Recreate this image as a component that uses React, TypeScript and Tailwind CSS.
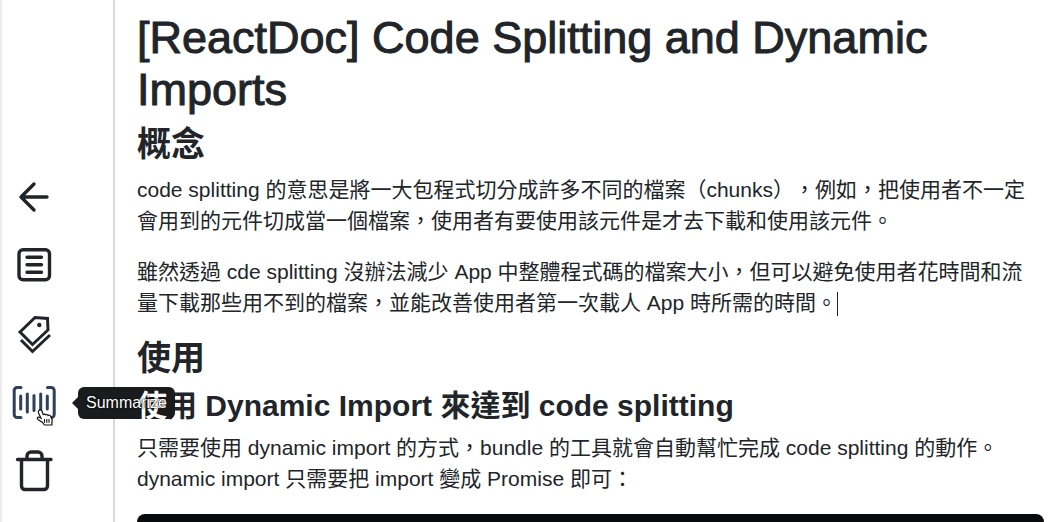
import React from "react";

const icon = {
  viewBox: "0 0 48 48",
  fill: "none",
  stroke: "currentColor",
  strokeWidth: 3,
  strokeLinecap: "round" as const,
  strokeLinejoin: "round" as const,
  className: "size-12",
  "aria-hidden": true,
};

function BackIcon() {
  return (
    <svg {...icon} strokeWidth={3.4}>
      <path d="M37 24H11M24 11 11 24l13 13" />
    </svg>
  );
}

function NoteIcon() {
  return (
    <svg {...icon} strokeWidth={3.4}>
      <rect x="9" y="8.700" width="30.500" height="30" rx="4" />
      <path d="M17 16.300h14.500M17 23.800h14.500M17 31.300h14.500" />
    </svg>
  );
}

function TagsIcon() {
  return (
    <svg {...icon} strokeLinecap="butt" strokeLinejoin="miter">
      <path d="M10 23 25 8.500l12.500 1L38 21 22.500 35.500Z" />
      <path d="M11 31 22.500 42.500 40 26" />
      <circle cx="29.300" cy="16" r="2.200" fill="currentColor" stroke="none" />
    </svg>
  );
}

function SummarizeIcon() {
  return (
    <svg {...icon}>
      <path d="M11 10.500H7.200a3 3 0 0 0-3 3v24a3 3 0 0 0 3 3H11M37.500 10.500h3.700a3 3 0 0 1 3 3v24a3 3 0 0 1-3 3h-3.700" />
      <path d="M10.700 19v13M17.300 17v18M24 18.500v15M30.700 17v18M37.300 19v13" />
    </svg>
  );
}

function TrashIcon() {
  return (
    <svg {...icon} strokeWidth={3.4}>
      <path d="M7.500 14.500H41M11.500 14.500V41a3.500 3.500 0 0 0 3.500 3.500h19a3.500 3.500 0 0 0 3.500-3.500V14.500M17 14.500v-3.500a4 4 0 0 1 4-4h7a4 4 0 0 1 4 4v3.500" />
    </svg>
  );
}

function HandPointer() {
  return (
    <svg viewBox="0 0 18 18" className="pointer-events-none absolute top-8 left-[26px] size-[18px]" aria-hidden="true">
      <path
        d="M3 1.500c1-1 2.500-.6 2.900.5L7.200 5.500c.9-.8 2-.5 2.400.3.9-.6 2-.3 2.400.6 1.200-.6 2.300 0 2.600 1l1.500 3.300c.4 1-.2 1.900-.2 3V16H8.500L6.500 13.500 2 10.500c-1.500-1.300-.3-2.900 1-2.300l2 1L2.500 4c-.4-1-.3-1.900.5-2.500Z"
        fill="#fff"
        stroke="#111"
        strokeWidth="1.200"
      />
      <path d="M8.500 10v3.800M10.800 10v3.800M13 10v3.800" stroke="#111" strokeWidth="1.100" />
    </svg>
  );
}

const tool = "flex size-12 items-center justify-center";

export default function App() {
  return (
    <div className="flex min-h-screen bg-white font-['Liberation_Sans','Noto_Sans_CJK_TC',sans-serif] text-[#212529] [text-spacing-trim:space-all]">
      <nav
        aria-label="Note tools"
        className="flex w-[115px] shrink-0 flex-col gap-5 border-r-2 border-l-2 border-r-[#d9d9d9] border-l-[#ececec] pt-[173px] pl-2"
      >
        <button type="button" aria-label="Back" className={tool}>
          <BackIcon />
        </button>
        <button type="button" aria-label="Note" className={tool}>
          <NoteIcon />
        </button>
        <button type="button" aria-label="Tags" className={tool}>
          <TagsIcon />
        </button>
        <button
          type="button"
          aria-describedby="tip"
          aria-label="Summarize"
          className="relative flex size-12 items-center justify-center text-[#2f405a]"
        >
          <SummarizeIcon />
          <HandPointer />
          <span
            id="tip"
            role="tooltip"
            className="absolute top-[10px] left-[68px] flex h-8 items-center rounded-md bg-[#191b1d] px-2 text-base text-white"
          >
            <svg viewBox="0 0 6 12" className="absolute top-[10px] -left-[6px] h-3 w-[6px]" aria-hidden="true">
              <path d="M6 0v12L0 6Z" fill="#191b1d" />
            </svg>
            <span className="relative z-20 [text-shadow:0_0_1px_#000,0_0_2px_#000]">Summarize</span>
          </span>
        </button>
        <button type="button" aria-label="Delete" className={tool}>
          <TrashIcon />
        </button>
      </nav>

      <main className="h-screen min-w-0 flex-1 overflow-hidden pt-3 pr-2 pl-[22px]">
        <h1 className="mb-2 text-[45px] leading-[52px] font-medium [-webkit-text-stroke:1px]">
          [ReactDoc] Code Splitting and Dynamic Imports
        </h1>
        <h2 className="mb-[10px] text-[34px] leading-10 font-bold">概念</h2>
        <p className="mb-5 pr-2 text-[21px] leading-[31px]">
          code splitting 的意思是將一大包程式切分成許多不同的檔案（chunks），例如，把使用者不一定會用到的元件切成當一個檔案，使用者有要使用該元件是才去下載和使用該元件。
        </p>
        <p className="mb-5 pr-2 text-[21px] leading-[31px]">
          雖然透過 cde splitting 沒辦法減少 App 中整體程式碼的檔案大小，但可以避免使用者花時間和流量下載那些用不到的檔案，並能改善使用者第一次載人 App 時所需的時間。
          <span className="inline-block h-6 w-px bg-[#212529] align-middle" />
        </p>
        <h2 className="mb-[10px] text-[34px] leading-10 font-bold">使用</h2>
        <h3 className="mb-2 text-[30px] leading-9 font-bold">
          <span className="relative z-10 text-white">使</span>用 Dynamic Import 來達到 code splitting
        </h3>
        <p className="mb-5 pr-2 text-[21px] leading-[31px]">
          只需要使用 dynamic import 的方式，bundle 的工具就會自動幫忙完成 code splitting 的動作。dynamic import 只需要把 import 變成 Promise 即可：
        </p>
        <div className="h-40 rounded-lg bg-[#08090b]" />
      </main>
    </div>
  );
}
